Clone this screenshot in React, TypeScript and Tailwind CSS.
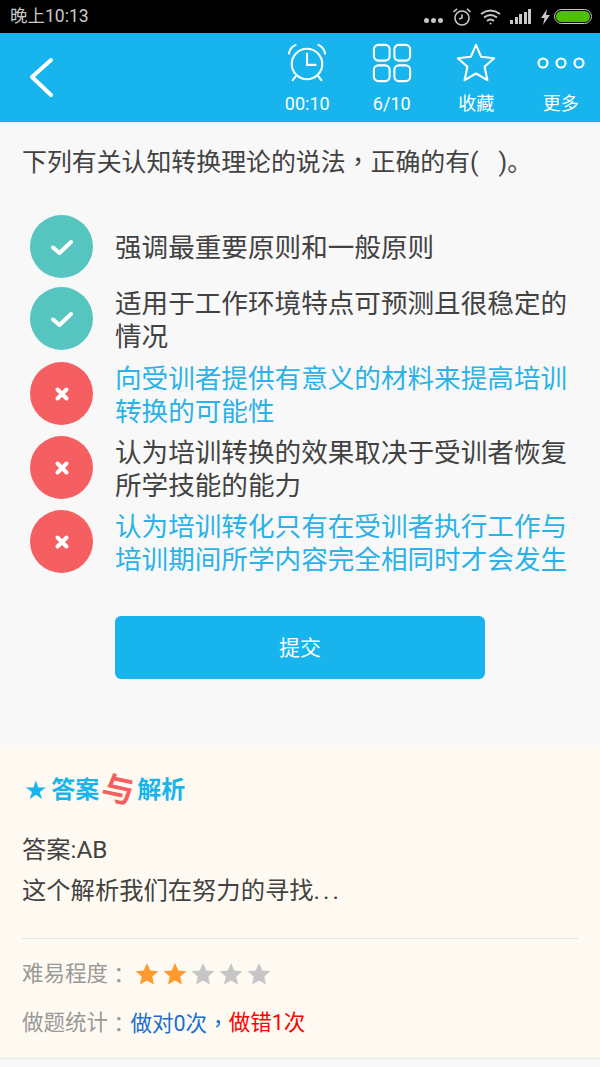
const font = { fontFamily: '"Roboto", "Noto Sans CJK SC", sans-serif' };
const tcFont = { fontFamily: '"Noto Sans CJK TC", sans-serif' };

function Check() {
  return (
    <svg width="24" height="24" viewBox="0 0 24 24" fill="none" stroke="white" strokeWidth="4" strokeLinecap="round" strokeLinejoin="round">
      <path d="M3 12.5 L9.5 18 L21 7" />
    </svg>
  );
}

function Cross() {
  return (
    <svg width="24" height="24" viewBox="0 0 24 24" fill="none" stroke="white" strokeWidth="4" strokeLinecap="round">
      <path d="M7.5 7.5 L16.5 16.5 M16.5 7.5 L7.5 16.5" />
    </svg>
  );
}

function Star({ color }: { color: string }) {
  return (
    <svg width="24" height="24" viewBox="0 0 24 24" fill={color}>
      <path d="M12 1 L15.3 8.4 L23.4 9.2 L17.3 14.6 L19 22.6 L12 18.5 L5 22.6 L6.7 14.6 L0.6 9.2 L8.7 8.4 Z" />
    </svg>
  );
}

const options = [
  { ok: true, text: "强调最重要原则和一般原则", blue: false, cls: "h-[63px] mb-[9px]" },
  { ok: true, text: "适用于工作环境特点可预测且很稳定的情况", blue: false, cls: "h-[63px] mb-[12px]" },
  { ok: false, text: "向受训者提供有意义的材料来提高培训转换的可能性", blue: true, cls: "h-[63px] mb-[11px]" },
  { ok: false, text: "认为培训转换的效果取决于受训者恢复所学技能的能力", blue: false, cls: "h-[63px] mb-[11px]" },
  { ok: false, text: "认为培训转化只有在受训者执行工作与培训期间所学内容完全相同时才会发生", blue: true, cls: "h-[63px]" },
];

function HeaderItem({ label, icon }: { label: string; icon: React.ReactNode }) {
  return (
    <div className="flex w-[84.5px] flex-col items-center">
      <div className="flex h-[40px] items-center justify-center">{icon}</div>
      <div className="mt-[9px] text-[18px] leading-[24px] text-white">{label}</div>
    </div>
  );
}

export default function App() {
  return (
    <div className="flex h-[1067px] w-[600px] flex-col overflow-hidden bg-[#f8f8f8]" style={font}>
      {/* status bar */}
      <div className="flex h-[33px] items-center justify-between bg-black pl-[10px] pr-[8px] text-[#c8c8c8]">
        <span className="text-[17.5px] leading-[33px]">晚上10:13</span>
        <div className="flex items-center">
          <div className="mr-[9px] mt-[8px] flex gap-[2px]">
            <span className="h-[5px] w-[5px] rounded-full bg-[#c8c8c8]" />
            <span className="h-[5px] w-[5px] rounded-full bg-[#c8c8c8]" />
            <span className="h-[5px] w-[5px] rounded-full bg-[#c8c8c8]" />
          </div>
          <svg width="20" height="20" viewBox="0 0 20 20" fill="none" stroke="#c8c8c8" strokeWidth="1.6" className="mr-[8px]">
            <circle cx="10" cy="11" r="7" />
            <path d="M10 7.5 V11 L7 12 M1.5 5 L5 1.8 M18.5 5 L15 1.8" />
          </svg>
          <svg width="21" height="16" viewBox="0 0 21 16" fill="none" stroke="#c8c8c8" strokeWidth="2" className="mr-[9px]">
            <path d="M1 5 Q10.5 -2 20 5 M4 8.5 Q10.5 3.5 17 8.5 M7 12 Q10.5 9 14 12" />
            <circle cx="10.5" cy="14.5" r="1" fill="#c8c8c8" stroke="none" />
          </svg>
          <div className="mr-[10px] flex items-end gap-[1.5px]">
            <span className="h-[4px] w-[3px] bg-[#c8c8c8]" />
            <span className="h-[7px] w-[3px] bg-[#c8c8c8]" />
            <span className="h-[10px] w-[3px] bg-[#c8c8c8]" />
            <span className="h-[12px] w-[3px] bg-[#c8c8c8]" />
            <span className="h-[15px] w-[3px] bg-[#c8c8c8]" />
          </div>
          <svg width="9" height="16" viewBox="0 0 9 16" fill="#c8c8c8" className="mr-[4px]">
            <path d="M6 0 L0 9 H3.5 L2 16 L9 6 H5 Z" />
          </svg>
          <div className="flex h-[15px] w-[38px] items-center rounded-full border border-[#c8c8c8] p-[1px]">
            <div className="h-full w-full rounded-full bg-[#4fc000]" />
          </div>
        </div>
      </div>

      {/* title bar */}
      <div className="flex h-[89px] items-start bg-[#18b4ed]">
        <svg width="28" height="44" viewBox="0 0 28 44" fill="none" stroke="white" strokeWidth="4" strokeLinecap="round" strokeLinejoin="round" className="ml-[28px] mt-[22px]">
          <path d="M23 5 L4 22 L23 40" />
        </svg>
        <div className="ml-auto mr-[-3px] flex pt-[10px]">
          <HeaderItem
            label="00:10"
            icon={
              <svg width="40" height="40" viewBox="0 0 42 42" fill="none" stroke="white" strokeWidth="2.2" strokeLinecap="round">
                <circle cx="21" cy="22" r="16" />
                <path d="M21 11 V23 H30 M2 11 Q3 5 9 2 M40 11 Q39 5 33 2 M9 35 L6 39 M33 35 L36 39" />
              </svg>
            }
          />
          <HeaderItem
            label="6/10"
            icon={
              <svg width="40" height="40" viewBox="0 0 42 42" fill="none" stroke="white" strokeWidth="2.2">
                <rect x="2" y="2" width="16.5" height="16.5" rx="4.5" />
                <rect x="23.5" y="2" width="16.5" height="16.5" rx="4.5" />
                <rect x="2" y="23.5" width="16.5" height="16.5" rx="4.5" />
                <rect x="23.5" y="23.5" width="16.5" height="16.5" rx="4.5" />
              </svg>
            }
          />
          <HeaderItem
            label="收藏"
            icon={
              <svg width="40" height="40" viewBox="0 0 42 42" fill="none" stroke="white" strokeWidth="2.2" strokeLinejoin="round">
                <path d="M21 2 L26.5 14.5 L40 16 L30 25 L33 39 L21 32 L9 39 L12 25 L2 16 L15.5 14.5 Z" />
              </svg>
            }
          />
          <HeaderItem
            label="更多"
            icon={
              <svg width="48" height="14" viewBox="0 0 48 14" fill="none" stroke="white" strokeWidth="2.2">
                <circle cx="6" cy="7" r="4.5" />
                <circle cx="24" cy="7" r="4.5" />
                <circle cx="42" cy="7" r="4.5" />
              </svg>
            }
          />
        </div>
      </div>

      {/* question */}
      <div className="flex h-[624px] flex-col border-t border-[#eeeeee]">
        <div className="mt-[20px] whitespace-pre pl-[22px] text-[24.9px] leading-[34px] text-[#424242]">
          下列有关认知转换理论的说法<span style={tcFont}>，</span>正确的有(<span className="inline-block w-[20px]" />)。
        </div>
        <div className="mt-[35px] flex flex-col pl-[30px] pr-[30px]">
          {options.map((o) => (
            <div key={o.text} className={`flex items-center ${o.cls}`}>
              <div className={`flex h-[63px] w-[63px] shrink-0 items-center justify-center rounded-full ${o.ok ? "bg-[#57c5bf]" : "bg-[#f65f62]"}`}>
                {o.ok ? <Check /> : <Cross />}
              </div>
              <div className={`ml-[22px] mt-[2px] text-[26.6px] leading-[33px] ${o.blue ? "text-[#2bb2e8]" : "text-[#424242]"}`}>{o.text}</div>
            </div>
          ))}
        </div>
        <button className="mx-auto mt-[43px] h-[63px] w-[370px] rounded-[6px] bg-[#18b4ed] pt-[3px] text-[21px] text-white">提交</button>
      </div>

      {/* analysis */}
      <div className="flex h-[312px] flex-col bg-[#fffaf1] px-[22px]">
        <div className="mt-[24px] flex h-[40px] items-center text-[#18b4ed]">
          <span className="ml-[2px] text-[26px] leading-none" style={{ fontFamily: '"DejaVu Sans", sans-serif' }}>★</span>
          <span className="ml-[4px] text-[24px] font-bold leading-none">答案</span>
          <span className="ml-[3px] inline-block rotate-[12deg] text-[32px] font-bold leading-none text-[#f65f62]">与</span>
          <span className="ml-[3px] text-[24px] font-bold leading-none">解析</span>
        </div>
        <div className="mt-[19px] text-[24.3px] leading-[41px] text-[#424242]">答案:AB</div>
        <div className="text-[24.3px] leading-[41px] text-[#424242]">
          这个解析我们在努力的寻找<span className="tracking-[3px]">...</span>
        </div>
        <div className="mt-[27px] border-t border-[#e4e4e0]" />
        <div className="mt-[20px] flex h-[30px] items-center text-[21.5px] text-[#999999]">
          难易程度<span style={tcFont}>：</span>
          <div className="ml-[5px] flex gap-[4px]">
            <Star color="#ff9a2e" />
            <Star color="#ff9a2e" />
            <Star color="#c6c6c6" />
            <Star color="#c6c6c6" />
            <Star color="#c6c6c6" />
          </div>
        </div>
        <div className="mt-[19px] flex h-[30px] items-center text-[21.5px] text-[#999999]">
          做题统计<span style={tcFont}>：</span>
          <span className="ml-[1px] text-[#1a6fd0]">做对0次<span style={tcFont}>，</span></span>
          <span className="text-[#ff0000]">做错1次</span>
        </div>
      </div>
      <div className="flex-1 border-t border-[#e8e8e8] bg-[#f8f8f8]" />
    </div>
  );
}
